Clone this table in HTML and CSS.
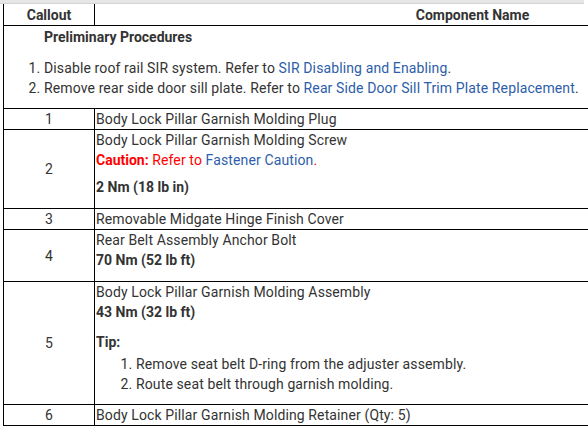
FILE: index.html
```html
<!DOCTYPE html>
<html>
<head>
<meta charset="utf-8">
<link rel="stylesheet" href="styles.css">
</head>
<body>
<div class="topbar"></div>
<div class="wrap">
<table class="parts">
  <thead>
    <tr><th class="c1">Callout</th><th class="c2">Component Name</th></tr>
  </thead>
  <tbody>
    <tr>
      <td colspan="2" class="prelim">
        <div class="prelim-title">Preliminary Procedures</div>
        <ol class="prelim-list">
          <li>Disable roof rail SIR system. Refer to <span class="link">SIR Disabling and Enabling</span>.</li>
          <li>Remove rear side door sill plate. Refer to <span class="link">Rear Side Door Sill Trim Plate Replacement</span>.</li>
        </ol>
      </td>
    </tr>
    <tr><td class="num">1</td><td class="name">Body Lock Pillar Garnish Molding Plug</td></tr>
    <tr>
      <td class="num">2</td>
      <td class="name">
        <div>Body Lock Pillar Garnish Molding Screw</div>
        <div class="caution"><b>Caution:</b> Refer to <span class="link">Fastener Caution</span>.</div>
        <div class="torque last">2 Nm (18 lb in)</div>
      </td>
    </tr>
    <tr><td class="num">3</td><td class="name">Removable Midgate Hinge Finish Cover</td></tr>
    <tr>
      <td class="num">4</td>
      <td class="name">
        <div>Rear Belt Assembly Anchor Bolt</div>
        <div class="torque last">70 Nm (52 lb ft)</div>
      </td>
    </tr>
    <tr>
      <td class="num">5</td>
      <td class="name">
        <div>Body Lock Pillar Garnish Molding Assembly</div>
        <div class="torque">43 Nm (32 lb ft)</div>
        <div class="tip-title">Tip:</div>
        <ol class="tip-list">
          <li>Remove seat belt D-ring from the adjuster assembly.</li>
          <li>Route seat belt through garnish molding.</li>
        </ol>
      </td>
    </tr>
    <tr><td class="num">6</td><td class="name">Body Lock Pillar Garnish Molding Retainer (Qty: 5)</td></tr>
  </tbody>
</table>
</div>
</body>
</html>
```

FILE: styles.css
```css
html, body {
  margin: 0;
  padding: 0;
  background: #fff;
  overflow: hidden;
}
body {
  font-family: Roboto, "Liberation Sans", sans-serif;
  font-size: 14px;
  line-height: 20px;
  color: #333;
  letter-spacing: 0.12px;
}
b, th, .prelim-title, .torque, .tip-title {
  letter-spacing: 0;
}
.topbar {
  height: 3px;
  background: #e6e6e6;
  border-bottom: 1px solid #d4d4d4;
  width: 584px;
}
.wrap {
  padding-left: 3px;
  width: 900px;
}
.parts {
  border-collapse: collapse;
  width: 848px;
  border-left: 1px solid #000;
}
.parts th, .parts td {
  border: 1px solid #000;
  padding: 0;
  vertical-align: middle;
}
.parts thead th {
  border-top: none;
  font-weight: bold;
  text-align: center;
  color: #333;
  height: 21px;
}
.parts .c1 { width: 90px; }
.parts .num { text-align: center; }
.parts .name { text-align: left; padding-left: 1px; }
.parts .prelim { padding: 1px 0 10px 0; }
.prelim-title {
  font-weight: bold;
  padding-left: 40px;
}
.prelim-list {
  margin: 11px 0 0 0;
  padding-left: 40px;
}
.link { color: #2d5ea9; }
.caution { color: #f00; margin-bottom: 7px; }
.caution b { font-weight: bold; }
.torque { font-weight: bold; margin-bottom: 10px; }
.torque.last { margin-bottom: 11px; }
.tip-title { font-weight: bold; }
.tip-list {
  margin: 2px 0 10px 0;
  padding-left: 40px;
}
```
